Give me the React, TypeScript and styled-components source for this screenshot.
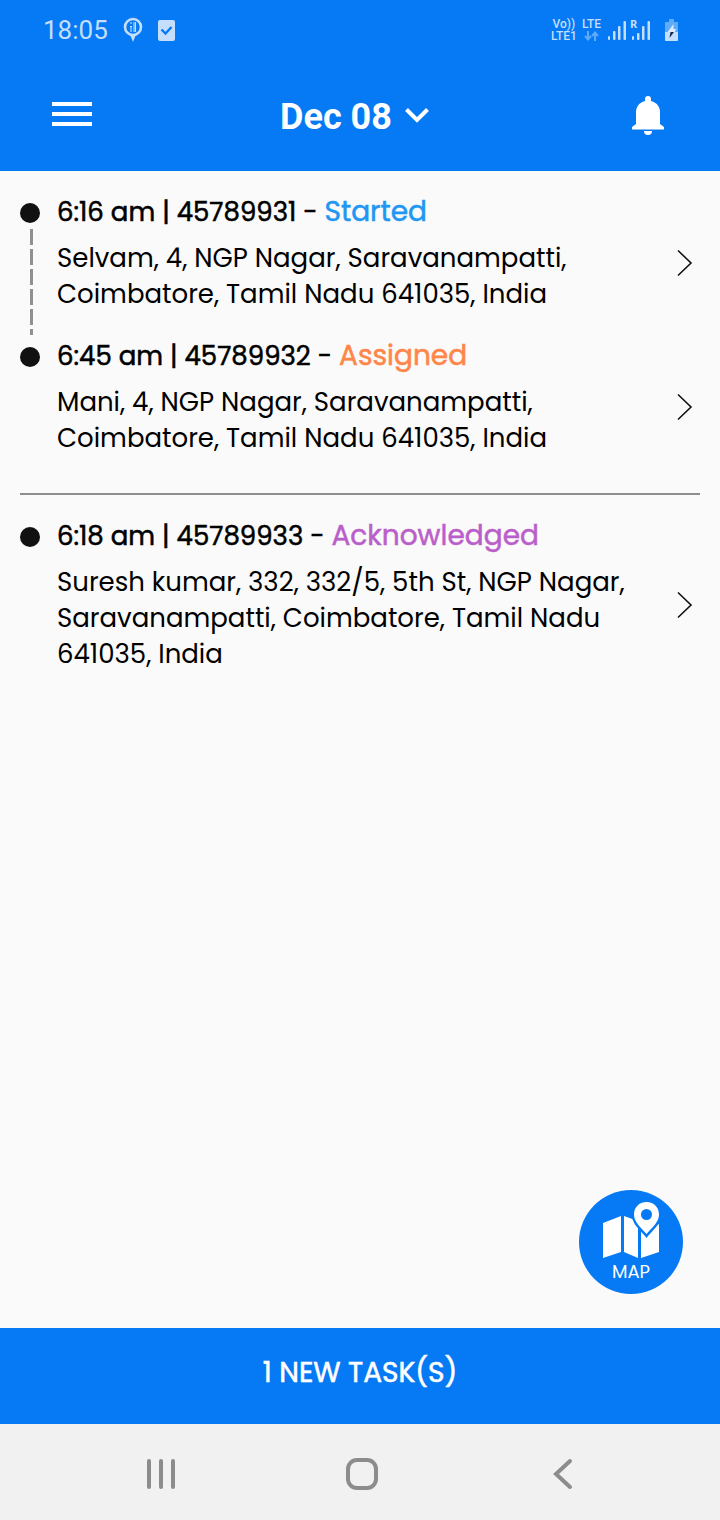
import React from "react";
import styled, { createGlobalStyle } from "styled-components";

const blue = "#067af5";
const pale = "#c4defc";

const GlobalStyle = createGlobalStyle`
  * { box-sizing: border-box; }
  body { margin: 0; background: #fafafa; font-family: Poppins, Inter, sans-serif; color: #000; }
  button { font: inherit; color: inherit; border: 0; padding: 0; background: none; cursor: pointer; }
  svg { display: block; flex: none; }
`;

const Screen = styled.div`
  display: flex;
  flex-direction: column;
  min-height: 100vh;
`;

const StatusBar = styled.div`
  display: flex;
  justify-content: space-between;
  align-items: center;
  height: 60px;
  padding: 0 42px 0 43px;
  background: ${blue};
  color: ${pale};
`;

const StatusSide = styled.div<{ $gap: number }>`
  display: flex;
  align-items: center;
  gap: ${(p) => p.$gap}px;
`;

const Clock = styled.time`
  font: 400 26px/32px Roboto, sans-serif;
`;

const Network = styled.span`
  display: flex;
  flex-direction: column;
  align-items: center;
  margin-right: 1px;
  font: 500 12px/12px Roboto, sans-serif;
`;

const SignalBox = styled.span`
  position: relative;
  margin-left: 2px;
`;

const Roaming = styled.span`
  position: absolute;
  left: -2px;
  top: -2px;
  font: 700 11px/14px "Noto Sans", sans-serif;
`;

const Battery = styled.svg`
  margin-left: 11px;
`;

const TopBar = styled.header`
  display: grid;
  grid-template-columns: 1fr auto 1fr;
  align-items: center;
  height: 111px;
  padding: 0 56px 0 52px;
  background: ${blue};
  color: #fff;
`;

const MenuButton = styled.button`
  justify-self: start;
`;

const BellButton = styled.button`
  justify-self: end;
`;

const DateButton = styled.button`
  && {
    display: flex;
    align-items: center;
    gap: 12px;
    padding: 2px 6px 0 0;
    font: 700 36px/44px Roboto, sans-serif;
  }
`;

const Main = styled.main`
  position: relative;
  flex: 1;
  padding: 0 20px 140px;
`;

const Group = styled.ul`
  margin: 0;
  padding: 23px 0 11px;
  list-style: none;

  & + & {
    border-top: 2px solid #8e8e8e;
  }
`;

const Stop = styled.li`
  display: flex;
  gap: 17px;
`;

const Rail = styled.div`
  display: flex;
  flex-direction: column;
  gap: 6px;
  width: 20px;
  padding: 9px 0 3px;
`;

const Dot = styled.span`
  width: 20px;
  height: 20px;
  border-radius: 50%;
  background: #111;
`;

const Dashes = styled.span`
  flex: 1;
  width: 3px;
  margin-left: 10px;
  background: repeating-linear-gradient(#909090 0 16px, transparent 16px 20px);
`;

const TaskButton = styled.button`
  && {
    flex: 1;
    display: flex;
    align-items: center;
    justify-content: space-between;
    gap: 24px;
    margin-bottom: 6px;
    padding-right: 7px;
    text-align: left;
  }
`;

const TaskText = styled.span`
  display: flex;
  flex-direction: column;
  gap: 10px;
  padding-bottom: 20px;
`;

const TaskTitle = styled.span`
  font-size: 26px;
  line-height: 36px;
  -webkit-text-stroke: 0.02em currentColor;
`;

const Status = styled.span<{ $color: string }>`
  font-size: 28px;
  color: ${(p) => p.$color};
`;

const Address = styled.span`
  font-size: 26px;
  line-height: 36px;
`;

const MapButton = styled.button`
  && {
    position: absolute;
    right: 37px;
    bottom: 34px;
    display: flex;
    flex-direction: column;
    align-items: center;
    width: 104px;
    height: 104px;
    padding-top: 11px;
    border-radius: 50%;
    background: ${blue};
    color: #fff;
    font-size: 18px;
    line-height: 24px;
  }
`;

const NewTasks = styled.button`
  && {
    height: 96px;
    padding-bottom: 6px;
    background: ${blue};
    color: #fff;
    font-size: 28px;
    line-height: 36px;
    -webkit-text-stroke: 0.02em currentColor;
  }
`;

const SystemNav = styled.nav`
  display: grid;
  grid-template-columns: repeat(3, 1fr);
  place-items: center;
  height: 96px;
  padding: 4px 56px 0 60px;
  background: #f1f1f1;
`;

const groups = [
  [
    {
      time: "6:16 am",
      id: "45789931",
      status: "Started",
      color: "#2196f3",
      lines: ["Selvam, 4, NGP Nagar, Saravanampatti,", "Coimbatore, Tamil Nadu 641035, India"],
    },
    {
      time: "6:45 am",
      id: "45789932",
      status: "Assigned",
      color: "#ff8548",
      lines: ["Mani, 4, NGP Nagar, Saravanampatti,", "Coimbatore, Tamil Nadu 641035, India"],
    },
  ],
  [
    {
      time: "6:18 am",
      id: "45789933",
      status: "Acknowledged",
      color: "#ba5fca",
      lines: ["Suresh kumar, 332, 332/5, 5th St, NGP Nagar,", "Saravanampatti, Coimbatore, Tamil Nadu", "641035, India"],
    },
  ],
];

const Signal = ({ roaming = false }: { roaming?: boolean }) => (
  <SignalBox>
    <svg width="18" height="22" viewBox="0 0 18 22" fill={pale}>
      <rect x="0" y="17" width="2" height="4" rx="1" />
      <rect x="5" y={roaming ? 14 : 12} width="2.500" height={roaming ? 7 : 9} rx="1" />
      <rect x="10" y="7" width="2.500" height="14" rx="1" />
      <rect x="15.500" y="2" width="2.500" height="19" rx="1" />
    </svg>
    {roaming && <Roaming>R</Roaming>}
  </SignalBox>
);

export default function App() {
  return (
    <Screen>
      <GlobalStyle />
      <StatusBar>
        <StatusSide $gap={15}>
          <Clock>18:05</Clock>
          <svg width="20" height="26" viewBox="0 0 20 26">
            <circle cx="10" cy="10" r="8" fill="none" stroke={pale} strokeWidth="2.6" />
            <path d="M7 17.5h6L10 25z" fill={pale} />
            <path d="M8 5v2M8 9v6M11 5v10M12.5 5v10M7 9.500h2" stroke={pale} strokeWidth="1.1" />
          </svg>
          <svg width="17" height="21" viewBox="0 0 17 21">
            <rect width="17" height="21" rx="2" fill={pale} />
            <path d="M3.5 9.5l4 4 6-6.5" fill="none" stroke={blue} strokeWidth="2.4" />
          </svg>
        </StatusSide>
        <StatusSide $gap={4}>
          <Network>
            <span>Vo))</span>
            <span>LTE1</span>
          </Network>
          <Network>
            <span>LTE</span>
            <svg width="15" height="12" viewBox="0 0 15 12" fill="none" stroke="#5fabf9" strokeWidth="2">
              <path d="M4 1v8M1 6l3 3.5L7 6M11 11V3M8 6l3-3.5L14 6" />
            </svg>
          </Network>
          <Signal />
          <Signal roaming />
          <Battery width="13" height="22" viewBox="0 0 13 22">
            <path d="M4 0h5v3h4v18a1 1 0 0 1-1 1H1a1 1 0 0 1-1-1V3h4z" fill="#5fabf9" />
            <path d="M0 13h13v8a1 1 0 0 1-1 1H1a1 1 0 0 1-1-1z" fill={pale} />
            <path d="M8.500 5L3 12.500V13h7l1-3H8.500z" fill="#dcebfd" />
            <path d="M5.500 13H9l-4.500 6z" fill="#0b2d55" />
          </Battery>
        </StatusSide>
      </StatusBar>

      <TopBar>
        <MenuButton aria-label="Menu">
          <svg width="40" height="28" viewBox="0 0 40 28" fill="#fff">
            <path d="M0 0h40v4H0zM0 10h40v4H0zM0 20h40v4H0z" />
          </svg>
        </MenuButton>
        <DateButton>
          Dec 08
          <svg width="26" height="20" viewBox="0 0 26 20" fill="none" stroke="#fff" strokeWidth="4">
            <path d="M2.500 2.500L13 13 23.500 2.500" />
          </svg>
        </DateButton>
        <BellButton aria-label="Notifications">
          <svg width="32" height="40" viewBox="0 0 32 40" fill="#fff">
            <path d="M16 0a3 3 0 0 1 3 3v2c6 1.500 9 6 9 11v12l4 3v2.500H0V31l4-3V16C4 11 7 6.500 13 5V3a3 3 0 0 1 3-3z" />
            <path d="M12 35h8a4 4 0 0 1-8 0z" />
          </svg>
        </BellButton>
      </TopBar>

      <Main>
        {groups.map((tasks, g) => (
          <Group key={g}>
            {tasks.map((t, i) => (
              <Stop key={t.id}>
                <Rail>
                  <Dot />
                  {i < tasks.length - 1 && <Dashes />}
                </Rail>
                <TaskButton>
                  <TaskText>
                    <TaskTitle>
                      {t.time} | {t.id} - <Status $color={t.color}>{t.status}</Status>
                    </TaskTitle>
                    <Address>
                      {t.lines.map((line, n) => (
                        <React.Fragment key={line}>
                          {n > 0 && <br />}
                          {line}
                        </React.Fragment>
                      ))}
                    </Address>
                  </TaskText>
                  <svg width="16" height="28" viewBox="0 0 16 28" fill="none" stroke="#111" strokeWidth="1.600">
                    <path d="M1 1.500L14 14 1 26.500" />
                  </svg>
                </TaskButton>
              </Stop>
            ))}
          </Group>
        ))}
        <MapButton>
          <svg width="58" height="59" viewBox="0 0 58 59">
            <path d="M1 22l18-7v36L1 57zM22 15l14 5v37l-14-6zM39 31l18-8v28l-18 6z" fill="#fff" />
            <path
              d="M44.500 1C37 1 32 6.500 32 13.500c0 8 8 14 12.500 19.500C49 27.500 57 21.500 57 13.500 57 6.500 52 1 44.500 1z"
              fill="#fff"
              stroke={blue}
              strokeWidth="5"
              paintOrder="stroke"
            />
            <circle cx="44.500" cy="13.500" r="5.500" fill={blue} />
          </svg>
          MAP
        </MapButton>
      </Main>

      <NewTasks>1 NEW TASK(S)</NewTasks>

      <SystemNav>
        <button aria-label="Recent apps">
          <svg width="30" height="32" viewBox="0 0 30 32" stroke="#8c8c8c" strokeWidth="4" strokeLinecap="round">
            <path d="M3 3v26M15 3v26M27 3v26" />
          </svg>
        </button>
        <button aria-label="Home">
          <svg width="32" height="32" viewBox="0 0 32 32" fill="none" stroke="#8c8c8c" strokeWidth="4">
            <rect x="2" y="2" width="28" height="28" rx="9" />
          </svg>
        </button>
        <button aria-label="Back">
          <svg width="20" height="32" viewBox="0 0 20 32" fill="none" stroke="#8c8c8c" strokeWidth="4" strokeLinecap="round">
            <path d="M17 3L3 16l14 13" />
          </svg>
        </button>
      </SystemNav>
    </Screen>
  );
}
